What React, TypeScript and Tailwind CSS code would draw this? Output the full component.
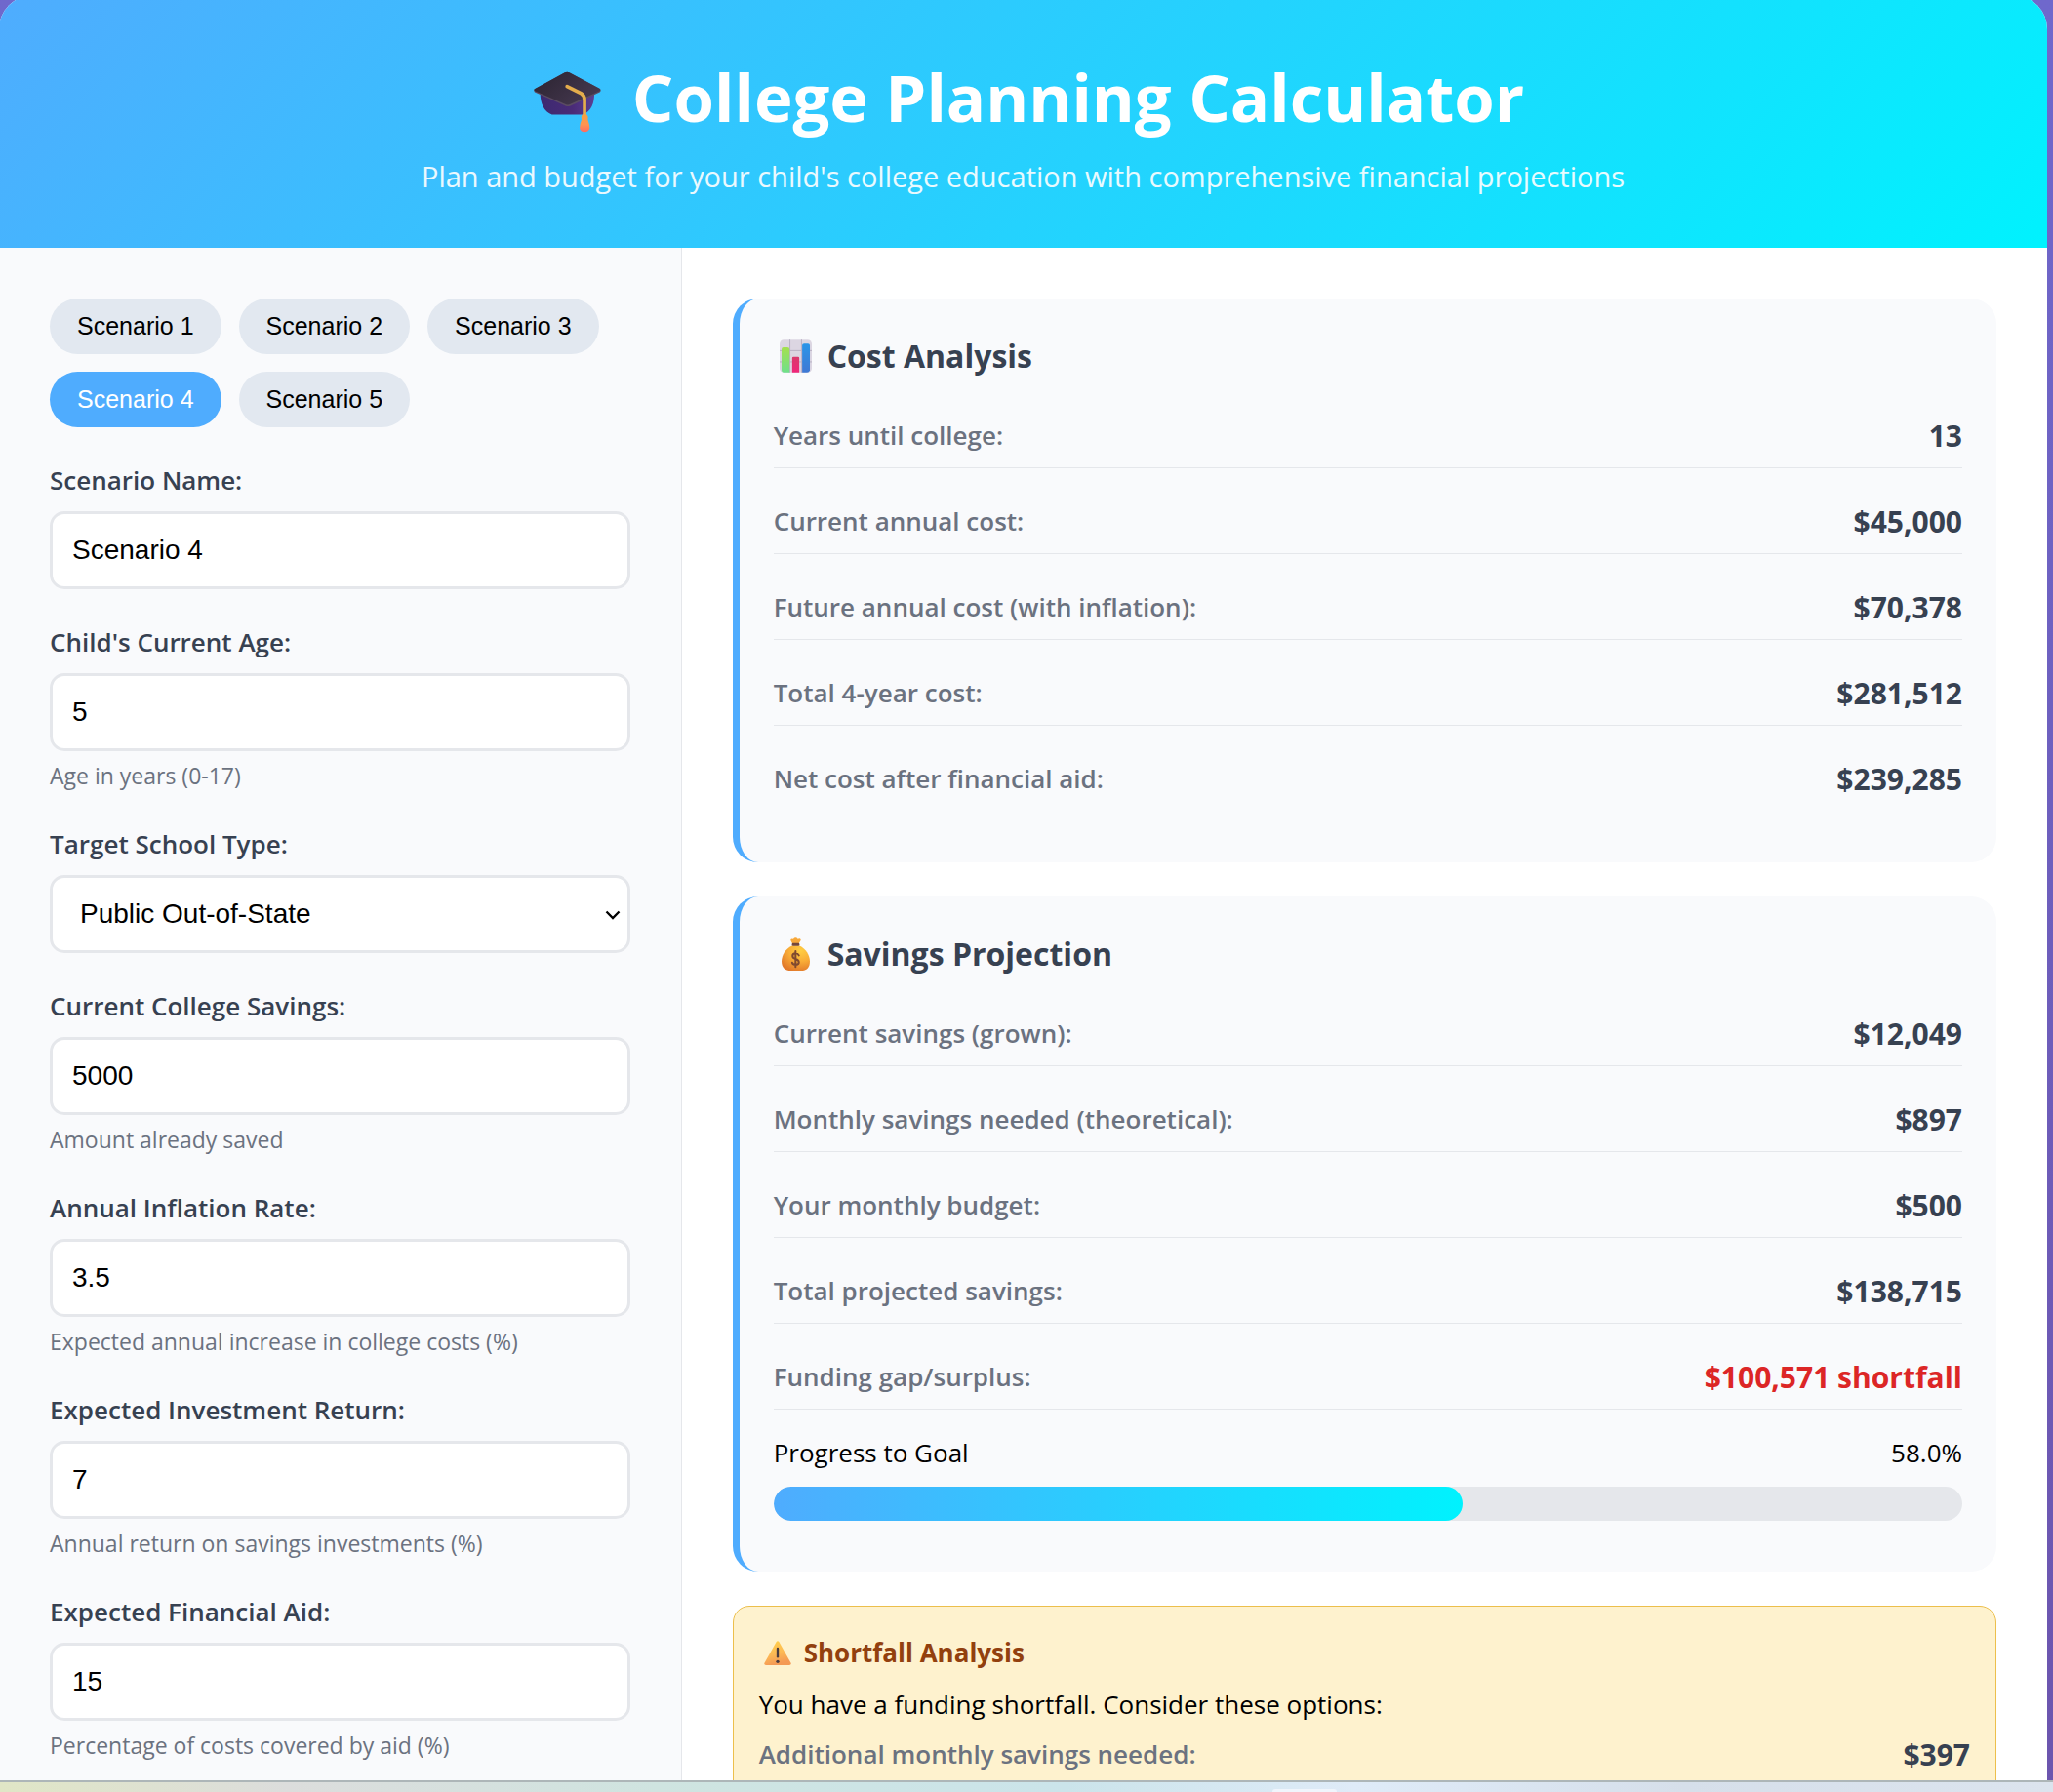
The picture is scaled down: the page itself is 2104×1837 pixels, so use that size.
import { useState } from "react";
import type { ReactNode } from "react";

function GraduationCap() {
  return (
    <svg viewBox="0 0 208 190" className="h-[63px] w-[69px] shrink-0" aria-hidden="true">
      <defs>
        <linearGradient id="cap-board" x1="0" y1="0" x2="1" y2="0.6">
          <stop offset="0" stopColor="#2a2430" />
          <stop offset="0.6" stopColor="#3a2f42" />
          <stop offset="1" stopColor="#44384e" />
        </linearGradient>
        <linearGradient id="cap-body" x1="0" y1="0" x2="1" y2="0">
          <stop offset="0" stopColor="#3c2a70" />
          <stop offset="0.6" stopColor="#4a2b78" />
          <stop offset="1" stopColor="#5a3f92" />
        </linearGradient>
        <linearGradient id="cap-tassel" x1="0" y1="0" x2="0" y2="1">
          <stop offset="0" stopColor="#f5a23f" />
          <stop offset="0.6" stopColor="#ff9450" />
          <stop offset="1" stopColor="#ff6a62" />
        </linearGradient>
      </defs>
      <path d="M20 66 L104 70 L187 66 C188 98 178 124 152 134 H56 C32 124 20 100 20 66Z" fill="url(#cap-body)" />
      <path d="M2 56 L96 4 Q103 0 110 4 L205 55 Q209 60 204 65 L114 107 Q105 111 96 106 L3 65 Q-1 60 2 56Z" fill="#5a4b62" />
      <path d="M2 55 L96 4 Q103 0 110 4 L205 54 Q208 58 204 61 L113 102 Q105 106 97 102 L3 61 Q0 58 2 55Z" fill="url(#cap-board)" />
      <path d="M103 47 L147 69 Q157 75 157 88 V134" fill="none" stroke="#e4ad4c" strokeWidth="11" strokeLinecap="round" strokeLinejoin="round" />
      <path d="M149 136 Q157 126 165 136 Q170 142 167 149 Q173 166 173 176 Q170 188 157 188 Q144 188 142 176 Q142 164 148 149 Q145 142 149 136Z" fill="url(#cap-tassel)" />
    </svg>
  );
}

function BarChartIcon() {
  return (
    <svg viewBox="0 0 100 102" className="h-[34px] w-[33px] shrink-0" aria-hidden="true">
      <defs>
        <linearGradient id="bar-green" x1="0" y1="0" x2="0" y2="1">
          <stop offset="0" stopColor="#a4e04e" />
          <stop offset="1" stopColor="#6fe08c" />
        </linearGradient>
        <linearGradient id="bar-pink" x1="0" y1="0" x2="0" y2="1">
          <stop offset="0" stopColor="#d93a6c" />
          <stop offset="1" stopColor="#f0267a" />
        </linearGradient>
        <linearGradient id="bar-blue" x1="0" y1="0" x2="0" y2="1">
          <stop offset="0" stopColor="#2a96e8" />
          <stop offset="1" stopColor="#3f78d4" />
        </linearGradient>
      </defs>
      <rect width="100" height="102" rx="13" fill="#dcd6e2" />
      <path d="M32 0V102M68 0V102M0 34H100M0 69H100" stroke="#b9b1c3" strokeWidth="3" />
      <path d="M6 30 Q6 24 12 24 H24 Q31 24 31 31 V102 H13 Q6 102 6 92Z" fill="url(#bar-green)" />
      <path d="M39 57 Q39 53 43 53 H57 Q61 53 61 57 V102 H39Z" fill="url(#bar-pink)" />
      <path d="M70 18 Q70 12 76 12 H88 Q94 12 94 18 V95 Q92 102 85 102 H70Z" fill="url(#bar-blue)" />
    </svg>
  );
}

function MoneyBagIcon() {
  return (
    <svg viewBox="-6 0 97 100" className="h-[34px] w-[33px] shrink-0" aria-hidden="true">
      <defs>
        <radialGradient id="bag-body" cx="0.68" cy="0.2" r="0.85">
          <stop offset="0" stopColor="#ffce42" />
          <stop offset="0.5" stopColor="#f9ad37" />
          <stop offset="1" stopColor="#e27a2b" />
        </radialGradient>
      </defs>
      <path d="M33 20 L27 8 Q28 3 35 5 Q42 -3 49 5 Q56 2 58 8 L51 20Z" fill="#f7a83a" />
      <path d="M31 25 C12 34 0 53 0 72 C0 91 10 100 28 100 H58 C76 100 85 91 85 72 C85 53 73 34 54 25Z" fill="url(#bag-body)" />
      <rect x="31" y="17" width="23" height="9" rx="4" fill="#75483c" />
      <path d="M52 54 Q49 48 42 48 Q33 48 33 56 Q33 62 42 65 Q52 68 52 75 Q52 82 42 82 Q34 82 32 76 M42 41V89" fill="none" stroke="#80492f" strokeWidth="6" strokeLinecap="round" />
    </svg>
  );
}

function WarningIcon() {
  return (
    <svg viewBox="0 0 84 75" className="h-[25px] w-[28px] shrink-0" aria-hidden="true">
      <defs>
        <linearGradient id="warn-fill" x1="0" y1="0" x2="0.3" y2="1">
          <stop offset="0" stopColor="#ffd24a" />
          <stop offset="0.6" stopColor="#fdb955" />
          <stop offset="1" stopColor="#f49a55" />
        </linearGradient>
      </defs>
      <path d="M38 3 Q42 -2 46 3 L83 69 Q84 75 78 75 H6 Q0 75 1 69Z" fill="url(#warn-fill)" />
      <path d="M42 24V49" stroke="#4a3b3e" strokeWidth="7" strokeLinecap="round" />
      <circle cx="42" cy="64" r="5" fill="#4a3b3e" />
    </svg>
  );
}

const controlClass =
  "block w-full rounded-[15px] border-[3px] border-[#e5e7eb] bg-white font-['Liberation_Sans',Arial,sans-serif] text-[28px] leading-8 text-black outline-none focus:border-[#4facfe]";

function Field({ id, label, hint, children }: { id: string; label: string; hint?: string; children: ReactNode }) {
  return (
    <div className="mb-[35px]">
      <label htmlFor={id} className="mb-3 block text-[26px] leading-[39px] font-semibold text-[#374151]">
        {label}
      </label>
      {children}
      {hint && (
        <p id={`${id}-hint`} className="mt-[9px] text-[23px] leading-8 text-[#6b7280]">
          {hint}
        </p>
      )}
    </div>
  );
}

function TextField({ id, label, hint, value }: { id: string; label: string; hint?: string; value: string }) {
  return (
    <Field id={id} label={label} hint={hint}>
      <input
        id={id}
        type="text"
        defaultValue={value}
        aria-describedby={hint ? `${id}-hint` : undefined}
        className={`${controlClass} px-5 py-[21px]`}
      />
    </Field>
  );
}

function Metric({ label, value, negative, last }: { label: string; value: string; negative?: boolean; last?: boolean }) {
  return (
    <div
      className={`flex items-center justify-between border-b pt-2 pb-3 ${last ? "mb-[17px] border-transparent" : "mb-[26px] border-[#e5e7eb]"}`}
    >
      <dt className="text-[26px] leading-[41px] font-semibold text-[#6b7280]">{label}</dt>
      <dd className={`text-[30px] leading-[41px] font-bold ${negative ? "text-[#dc2626]" : "text-[#374151]"}`}>{value}</dd>
    </div>
  );
}

function Card({ icon, title, children }: { icon: ReactNode; title: string; children: ReactNode }) {
  return (
    <section className="mb-[35px] rounded-[26px] border-l-[7px] border-[#4facfe] bg-[#f9fafc] p-[35px]">
      <h2 className="mb-[29px] flex items-center text-[32px] leading-[48px] font-bold text-[#374151]">
        <span className="flex w-[55px] pl-1.5">{icon}</span>
        {title}
      </h2>
      {children}
    </section>
  );
}

export default function App() {
  const scenarios = [1, 2, 3, 4, 5];
  const [active, setActive] = useState(4);
  const progress = 58;

  return (
    <div className="flex h-screen flex-col overflow-hidden bg-linear-to-b from-[#6f68cc] to-[#6c55ae] font-['Open_Sans','Noto_Sans',sans-serif] text-black">
      <div className="min-h-0 flex-1 overflow-hidden">
        <div className="-mt-[5px] mr-1.5 -ml-px overflow-hidden rounded-t-[35px] bg-white">
          <header className="bg-[linear-gradient(135deg,#4facfe_0%,#00f2fe_100%)] px-[52px] pt-[58px] pb-[52px] text-center text-white">
            <h1 className="mb-[13px] flex items-center justify-center text-[67px] leading-[93px] font-bold">
              <span className="mr-8 ml-3 flex pt-2.5">
                <GraduationCap />
              </span>
              College Planning Calculator
            </h1>
            <p className="text-[29px] leading-[43px] opacity-90">
              Plan and budget for your child's college education with comprehensive financial projections
            </p>
          </header>

          <div className="grid grid-cols-[1fr_2fr]">
            <aside className="border-r border-[#e5e7eb] bg-[#f9fafc] p-[52px]">
              <div className="mb-[35px] flex flex-wrap gap-[18px]">
                {scenarios.map((n) => (
                  <button
                    key={n}
                    type="button"
                    aria-pressed={n === active}
                    onClick={() => setActive(n)}
                    className={`rounded-full px-7 py-3.5 font-['Liberation_Sans',Arial,sans-serif] text-[25px] leading-[29px] ${n === active ? "bg-[#4facfe] text-white" : "bg-[#e2e8f0] text-black"}`}
                  >
                    Scenario {n}
                  </button>
                ))}
              </div>
              <form>
                <TextField id="name" label="Scenario Name:" value="Scenario 4" />
                <TextField id="age" label="Child's Current Age:" value="5" hint="Age in years (0-17)" />
                <Field id="school" label="Target School Type:">
                  <div className="relative">
                    <select id="school" defaultValue="out" className={`${controlClass} appearance-none px-7 py-[21px]`}>
                      <option value="in">Public In-State</option>
                      <option value="out">Public Out-of-State</option>
                      <option value="private">Private</option>
                    </select>
                    <svg viewBox="0 0 16 10" className="pointer-events-none absolute top-9 right-2.5 h-2.5 w-4" aria-hidden="true">
                      <path d="M1.5 1.5L8 8L14.5 1.5" fill="none" stroke="#000" strokeWidth="2.3" />
                    </svg>
                  </div>
                </Field>
                <TextField id="savings" label="Current College Savings:" value="5000" hint="Amount already saved" />
                <TextField id="inflation" label="Annual Inflation Rate:" value="3.5" hint="Expected annual increase in college costs (%)" />
                <TextField id="return" label="Expected Investment Return:" value="7" hint="Annual return on savings investments (%)" />
                <TextField id="aid" label="Expected Financial Aid:" value="15" hint="Percentage of costs covered by aid (%)" />
              </form>
            </aside>

            <main className="p-[52px]">
              <Card icon={<BarChartIcon />} title="Cost Analysis">
                <dl>
                  <Metric label="Years until college:" value="13" />
                  <Metric label="Current annual cost:" value="$45,000" />
                  <Metric label="Future annual cost (with inflation):" value="$70,378" />
                  <Metric label="Total 4-year cost:" value="$281,512" />
                  <Metric label="Net cost after financial aid:" value="$239,285" last />
                </dl>
              </Card>

              <Card icon={<MoneyBagIcon />} title="Savings Projection">
                <dl>
                  <Metric label="Current savings (grown):" value="$12,049" />
                  <Metric label="Monthly savings needed (theoretical):" value="$897" />
                  <Metric label="Your monthly budget:" value="$500" />
                  <Metric label="Total projected savings:" value="$138,715" />
                  <Metric label="Funding gap/surplus:" value="$100,571 shortfall" negative />
                </dl>
                <div className="mb-[17px]">
                  <div className="mb-4 flex justify-between text-[26px] leading-[37px]">
                    <span>Progress to Goal</span>
                    <span>{progress.toFixed(1)}%</span>
                  </div>
                  <div
                    role="progressbar"
                    aria-label="Progress to Goal"
                    aria-valuenow={progress}
                    className="h-[35px] overflow-hidden rounded-full bg-[#e5e7eb]"
                  >
                    <div
                      className="h-full rounded-full bg-[linear-gradient(90deg,#4facfe_0%,#00f2fe_100%)]"
                      style={{ width: `${progress}%` }}
                    />
                  </div>
                </div>
              </Card>

              <section className="rounded-[17px] border border-[#ecbf4c] bg-[#fef2ce] px-[26px] pt-[29px] pb-[120px]">
                <h3 className="mb-4 flex items-center text-[26px] leading-[37px] font-bold text-[#92400e]">
                  <span className="flex w-[46px] pl-[5px]">
                    <WarningIcon />
                  </span>
                  Shortfall Analysis
                </h3>
                <p className="mb-3 text-[26px] leading-[37px]">You have a funding shortfall. Consider these options:</p>
                <dl className="flex items-center justify-between">
                  <dt className="text-[26px] leading-[41px] font-semibold text-[#6b7280]">Additional monthly savings needed:</dt>
                  <dd className="text-[30px] leading-[41px] font-bold text-[#374151]">$397</dd>
                </dl>
              </section>
            </main>
          </div>
        </div>
      </div>

      <footer className="flex h-3 shrink-0 items-end overflow-hidden border-t-2 border-[#adb6b8] bg-[linear-gradient(90deg,#e0e6c6_0%,#dcdddc_14%,#cfe4e0_32%,#cbe4ea_52%,#dfebf8_66%,#d6dfea_82%,#dce4ee_100%)]">
        <div className="ml-[62%] h-[3px] w-[66px] rounded-t-md bg-[#f0f5fc]" />
      </footer>
    </div>
  );
}
